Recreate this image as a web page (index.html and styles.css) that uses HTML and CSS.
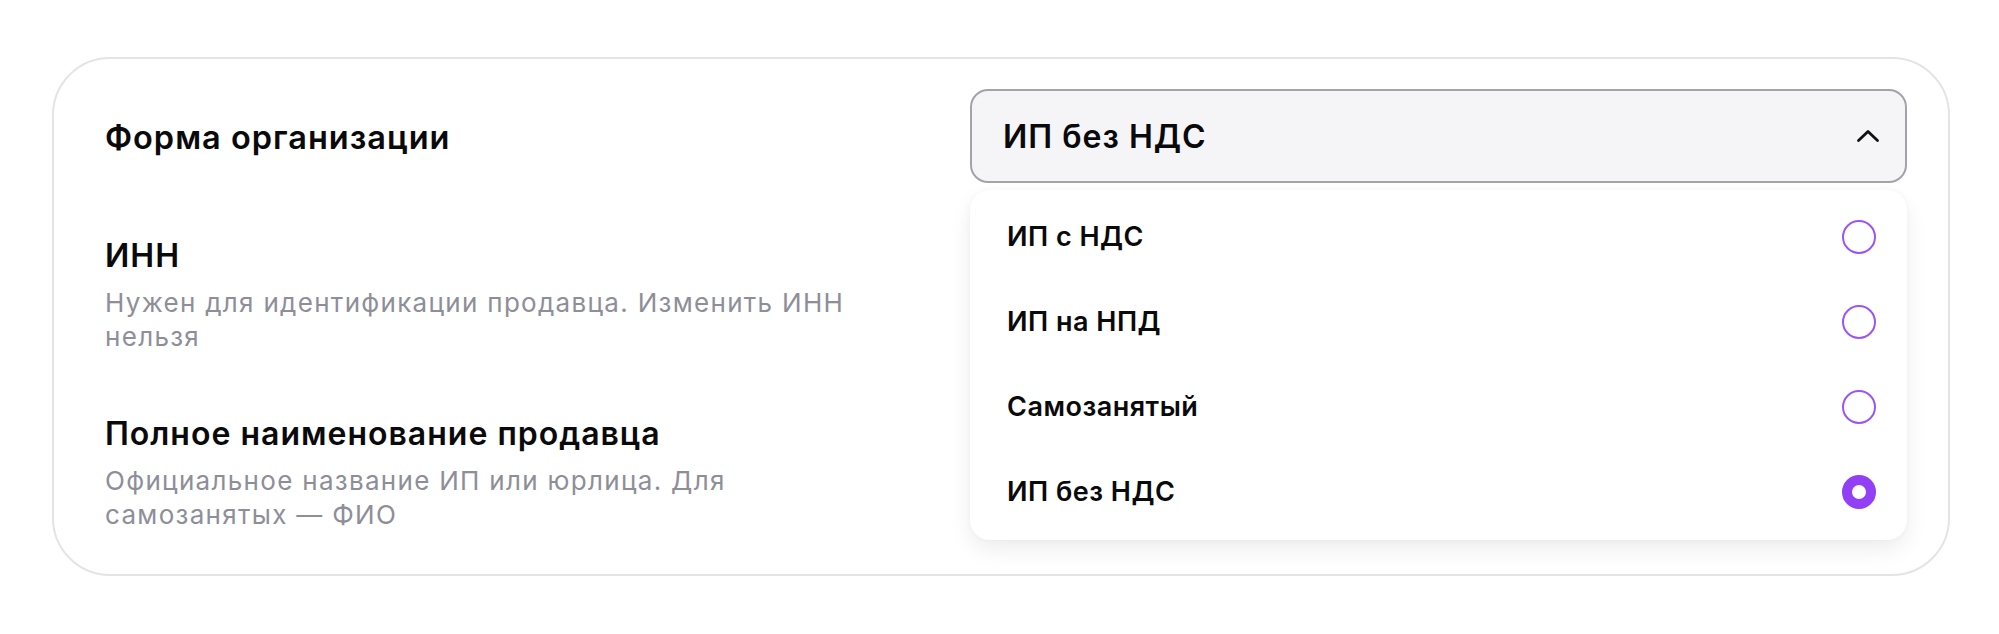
FILE: index.html
```html
<!DOCTYPE html>
<html lang="ru">
<head>
<meta charset="utf-8">
<title>Форма организации</title>
<link rel="stylesheet" href="styles.css">
</head>
<body>
<div class="page">
  <section class="card">
    <div class="field field-first">
      <div class="label-wrap label-center">
        <div class="label label-form">Форма организации</div>
      </div>
      <div class="control">
        <div class="select">
          <span class="select-value">ИП без НДС</span>
          <svg class="chevron" width="24" height="14" viewBox="0 0 24 14" aria-hidden="true">
            <path d="M2.5 11.5 L12 2.5 L21.5 11.5" fill="none" stroke="#111" stroke-width="2.8" stroke-linecap="round" stroke-linejoin="round"/>
          </svg>
        </div>
        <ul class="menu">
          <li class="option"><span class="option-text">ИП с НДС</span><span class="radio"></span></li>
          <li class="option"><span class="option-text">ИП на НПД</span><span class="radio"></span></li>
          <li class="option"><span class="option-text">Самозанятый</span><span class="radio"></span></li>
          <li class="option"><span class="option-text">ИП без НДС</span><span class="radio radio-checked"></span></li>
        </ul>
      </div>
    </div>
    <div class="field field-inn">
      <div class="label-wrap">
        <div class="label">ИНН</div>
        <div class="hint">Нужен для идентификации продавца. Изменить ИНН нельзя</div>
      </div>
    </div>
    <div class="field field-name">
      <div class="label-wrap">
        <div class="label">Полное наименование продавца</div>
        <div class="hint">Официальное название ИП или юрлица. Для самозанятых — ФИО</div>
      </div>
    </div>
  </section>
</div>
</body>
</html>
```

FILE: styles.css
```css
* { box-sizing: border-box; }

html, body {
  margin: 0;
  padding: 0;
  background: #ffffff;
}

body {
  font-family: Inter, "Noto Sans", "Liberation Sans", sans-serif;
  color: #0a0a0c;
}

.page {
  padding: 57px 49px 0 52px;
}

.card {
  height: 519px;
  border: 2px solid #e4e4e7;
  border-radius: 58px;
  padding: 30px 41px 0 51px;
  display: flex;
  flex-direction: column;
}

.field {
  display: grid;
  grid-template-columns: 1fr 937px;
  column-gap: 40px;
}

.field-inn { margin-top: 53px; }
.field-name { margin-top: 60px; }

.label-wrap {
  display: flex;
  flex-direction: column;
  max-width: 768px;
}

.label-center {
  justify-content: center;
  padding-top: 4px;
}

.label {
  font-size: 32px;
  line-height: 40px;
  font-weight: 600;
  color: #0a0a0c;
  letter-spacing: 1px;
}

.label-form {
  font-size: 32.5px;
}

.hint {
  margin-top: 10px;
  font-size: 26px;
  line-height: 34px;
  color: #8e8e99;
  letter-spacing: 1.3px;
}

.control {
  position: relative;
}

.select {
  height: 94px;
  border: 2px solid #a3a3a9;
  border-radius: 18px;
  background: #f5f5f7;
  display: flex;
  align-items: center;
  justify-content: space-between;
  padding: 0 25px 0 31px;
}

.select-value {
  font-size: 32px;
  font-weight: 600;
  letter-spacing: 1px;
  color: #0a0a0c;
}

.chevron {
  display: block;
}

.menu {
  position: absolute;
  top: calc(100% + 7px);
  left: 0;
  right: 0;
  margin: 0;
  padding: 4px 31px 6px 37px;
  list-style: none;
  background: #ffffff;
  border-radius: 20px;
  box-shadow: 0 10px 22px rgba(0, 0, 0, 0.07), 0 0 6px rgba(0, 0, 0, 0.035);
  z-index: 2;
}

.option {
  height: 85px;
  display: flex;
  align-items: center;
  justify-content: space-between;
}

.option-text {
  font-size: 27px;
  font-weight: 600;
  letter-spacing: 0.5px;
  color: #0a0a0c;
}

.radio {
  width: 34px;
  height: 34px;
  border-radius: 50%;
  border: 2.5px solid #9a55f7;
  flex: none;
}

.radio-checked {
  border: 10px solid #9140f5;
}
```
